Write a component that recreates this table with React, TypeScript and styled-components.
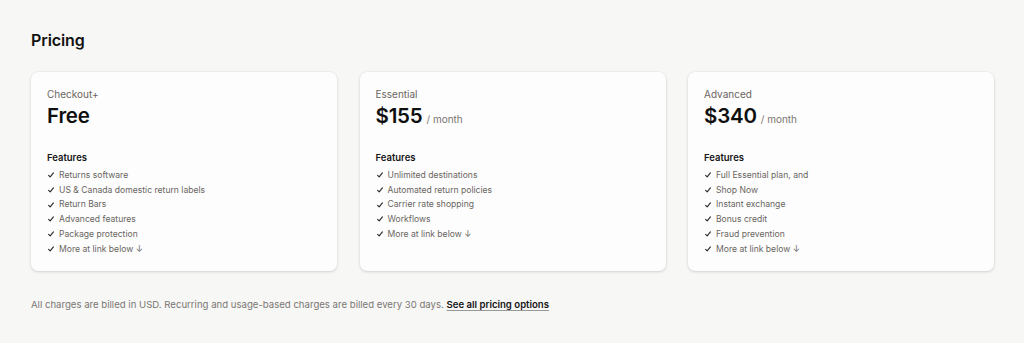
import React from "react";
import styled, { createGlobalStyle } from "styled-components";

const GlobalStyle = createGlobalStyle`
  html, body {
    margin: 0;
    padding: 0;
    background: #f7f7f6;
  }
  body {
    font-family: Inter, "Noto Sans", "Liberation Sans", sans-serif;
    color: #111;
    -webkit-font-smoothing: antialiased;
  }
`;

const Page = styled.div`
  padding: 30px 30px 20px 31px;
  display: flex;
  flex-direction: column;
`;

const Title = styled.h1`
  margin: 0;
  font-size: 16px;
  line-height: 20px;
  font-weight: 600;
  color: #121212;
  letter-spacing: -0.1px;
`;

const Grid = styled.div`
  margin-top: 22px;
  display: grid;
  grid-template-columns: repeat(3, 1fr);
  column-gap: 22.5px;
`;

const Card = styled.section`
  background: #fdfdfd;
  border-radius: 7px;
  box-shadow: 0 1px 3px rgba(0, 0, 0, 0.14), 0 0 0 0.5px rgba(0, 0, 0, 0.04);
  padding: 15px 16px 15px 16px;
  display: flex;
  flex-direction: column;
`;

const PlanName = styled.div`
  font-size: 10px;
  line-height: 14px;
  color: #6b6560;
`;

const PriceRow = styled.div`
  display: flex;
  align-items: baseline;
  gap: 4px;
  margin-top: 2px;
`;

const Price = styled.span`
  font-size: 20.5px;
  line-height: 26px;
  font-weight: 600;
  color: #0f0f0f;
  letter-spacing: -0.2px;
`;

const Period = styled.span`
  font-size: 10px;
  color: #7a7672;
`;

const FeaturesTitle = styled.div`
  margin-top: 22px;
  font-size: 9.5px;
  line-height: 14px;
  font-weight: 600;
  color: #151515;
`;

const List = styled.ul`
  list-style: none;
  margin: 3px 0 0 0;
  padding: 0;
  display: flex;
  flex-direction: column;
`;

const Item = styled.li`
  display: flex;
  align-items: center;
  gap: 5px;
  font-size: 8.6px;
  line-height: 14.7px;
  color: #69655f;
`;

const CheckIcon = styled.svg`
  width: 6px;
  height: 6px;
  flex: none;
  margin-left: 1px;
`;

const Footer = styled.p`
  margin: 27px 0 0 0;
  font-size: 9.6px;
  line-height: 14px;
  color: #7a7672;
`;

const FooterLink = styled.a`
  color: #141414;
  font-weight: 600;
  text-decoration: underline;
  text-underline-offset: 2px;
  text-decoration-color: #999;
`;

type Plan = { name: string; price: string; period?: string; features: string[] };

const plans: Plan[] = [
  {
    name: "Checkout+",
    price: "Free",
    features: [
      "Returns software",
      "US & Canada domestic return labels",
      "Return Bars",
      "Advanced features",
      "Package protection",
      "More at link below ↓",
    ],
  },
  {
    name: "Essential",
    price: "$155",
    period: "/ month",
    features: [
      "Unlimited destinations",
      "Automated return policies",
      "Carrier rate shopping",
      "Workflows",
      "More at link below ↓",
    ],
  },
  {
    name: "Advanced",
    price: "$340",
    period: "/ month",
    features: [
      "Full Essential plan, and",
      "Shop Now",
      "Instant exchange",
      "Bonus credit",
      "Fraud prevention",
      "More at link below ↓",
    ],
  },
];

const Check = () => (
  <CheckIcon viewBox="0 0 6 6" aria-hidden="true">
    <path d="M0.6 3.3 L2.2 4.9 L5.4 0.9" fill="none" stroke="#2a2a2a" strokeWidth="1.1" strokeLinecap="round" strokeLinejoin="round" />
  </CheckIcon>
);

export default function App() {
  return (
    <>
      <GlobalStyle />
      <Page>
        <Title>Pricing</Title>
        <Grid>
          {plans.map((p) => (
            <Card key={p.name}>
              <PlanName>{p.name}</PlanName>
              <PriceRow>
                <Price>{p.price}</Price>
                {p.period && <Period>{p.period}</Period>}
              </PriceRow>
              <FeaturesTitle>Features</FeaturesTitle>
              <List>
                {p.features.map((f) => (
                  <Item key={f}>
                    <Check />
                    {f}
                  </Item>
                ))}
              </List>
            </Card>
          ))}
        </Grid>
        <Footer>
          All charges are billed in USD. Recurring and usage-based charges are billed every 30 days.{" "}
          <FooterLink href="#">See all pricing options</FooterLink>
        </Footer>
      </Page>
    </>
  );
}
